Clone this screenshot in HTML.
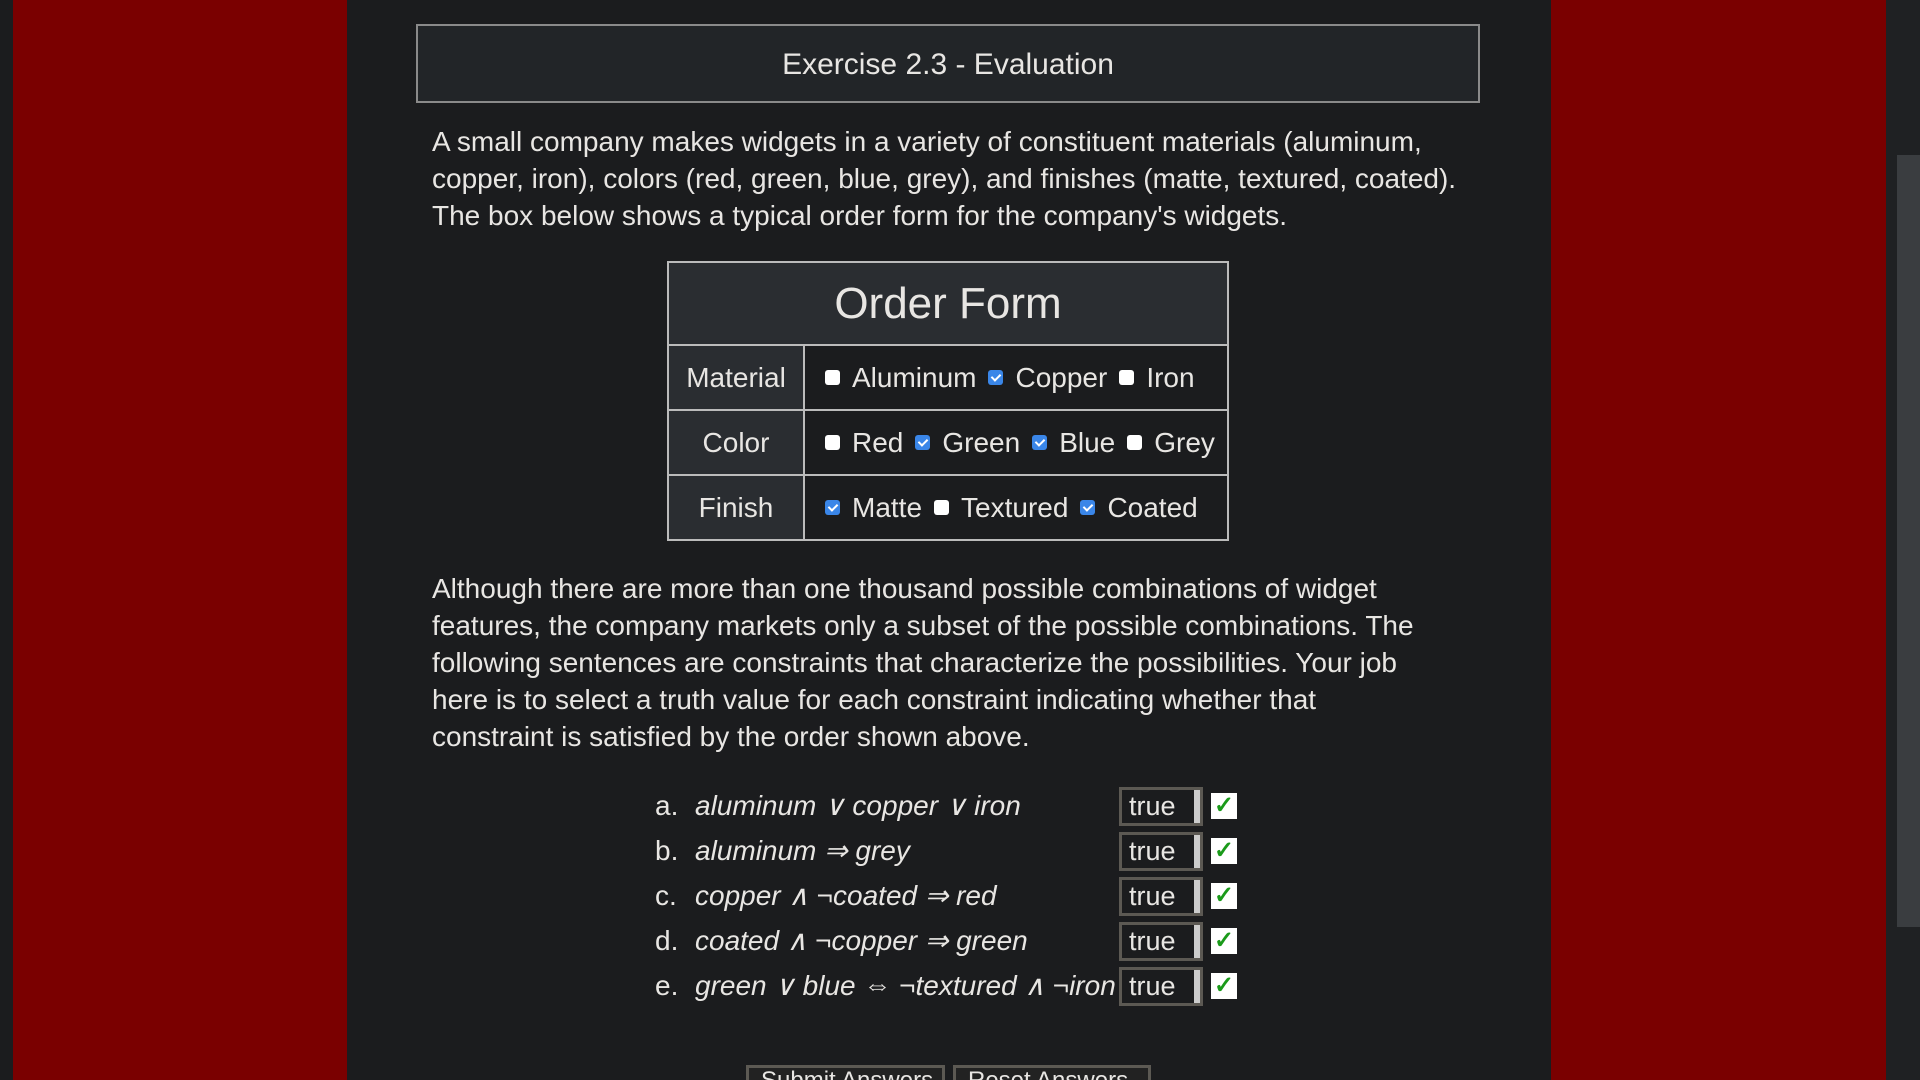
<!DOCTYPE html>
<html style="overflow:hidden"><head><meta charset="utf-8"><style>
*{box-sizing:border-box;margin:0;padding:0}
html,body{width:1920px;height:1080px;overflow:hidden}
body{background:#7a0000;font-family:"Liberation Sans",sans-serif;color:#e8e6e3;position:relative}
.edge{position:absolute;left:0;top:0;width:13px;height:1080px;background:#1b1c1e}
.main{position:absolute;left:347px;top:0;width:1204px;height:1080px;background:#1b1c1e}
.sb{position:absolute;left:1886px;top:0;width:34px;height:1080px;background:#1f2123}
.thumb{position:absolute;left:1897px;top:155px;width:23px;height:772px;background:#3a3d40}
.title{position:absolute;left:416px;top:24px;width:1064px;height:79px;border:2px solid #8a8a8a;background:#222528;text-align:center;line-height:77px;font-size:30px}
.p{position:absolute;left:432px;width:1100px;font-size:28px;line-height:37px;white-space:nowrap}
table{position:absolute;left:667px;top:261px;width:562px;height:280px;border-collapse:collapse;font-size:28px}
td,th{border:2px solid #bbb}
th{height:83px;background:#2a2d31;font-size:44px;font-weight:normal}
td.h{width:136px;background:#2a2d31;text-align:center}
td.v{background:#1b1c1e;padding-left:20px;white-space:nowrap}
.cb{display:inline-block;width:15px;height:15px;border-radius:3px;background:#fff;vertical-align:middle;margin:0 12px 4px 0}
.cb.on{background:#3a86e8;position:relative}
.cb.on:after{content:"";position:absolute;left:5px;top:2px;width:4px;height:7px;border:solid #fff;border-width:0 2px 2px 0;transform:rotate(45deg)}
.sp{margin-right:12px}
.q{position:absolute;left:655px;font-size:28px;height:40px;line-height:40px;width:600px}
.q .l{position:absolute;left:0}
.q .f{position:absolute;left:40px;font-style:italic;white-space:nowrap}
.sel{position:absolute;left:464px;top:1px;width:84px;height:39px;border:3px solid #5c5953;background:#1b1c1e;font-size:27px;line-height:33px;padding-left:7px}
.sel:after{content:"";position:absolute;right:0;top:0;width:6px;height:33px;background:#ccc}
.ok{position:absolute;left:556px;top:7px;width:26px;height:26px;background:#fff;color:#1a9a1a;font-size:24px;font-weight:bold;line-height:26px;text-align:center;font-style:normal}
.btn{position:absolute;top:1065px;height:30px;border:3px solid #5c5953;background:#222;font-size:24px;padding-left:12px;line-height:26px;overflow:hidden;white-space:nowrap}
</style></head><body>
<div class="edge"></div><div class="main"></div><div class="sb"></div><div class="thumb"></div>
<div class="title">Exercise 2.3 - Evaluation</div>
<div class="p" style="top:123px">A small company makes widgets in a variety of constituent materials (aluminum,<br>copper, iron), colors (red, green, blue, grey), and finishes (matte, textured, coated).<br>The box below shows a typical order form for the company's widgets.</div>
<table>
<tr><th colspan="2">Order Form</th></tr>
<tr><td class="h">Material</td><td class="v"><span class="cb"></span><span class="sp">Aluminum</span><span class="cb on"></span><span class="sp">Copper</span><span class="cb"></span>Iron</td></tr>
<tr><td class="h">Color</td><td class="v"><span class="cb"></span><span class="sp">Red</span><span class="cb on"></span><span class="sp">Green</span><span class="cb on"></span><span class="sp">Blue</span><span class="cb"></span>Grey</td></tr>
<tr><td class="h">Finish</td><td class="v"><span class="cb on"></span><span class="sp">Matte</span><span class="cb"></span><span class="sp">Textured</span><span class="cb on"></span>Coated</td></tr>
</table>
<div class="p" style="top:570px">Although there are more than one thousand possible combinations of widget<br>features, the company markets only a subset of the possible combinations. The<br>following sentences are constraints that characterize the possibilities. Your job<br>here is to select a truth value for each constraint indicating whether that<br>constraint is satisfied by the order shown above.</div>
<div class="q" style="top:786px"><span class="l">a.</span><span class="f">aluminum ∨ copper ∨ iron</span><div class="sel">true</div><div class="ok">✓</div></div>
<div class="q" style="top:831px"><span class="l">b.</span><span class="f">aluminum ⇒ grey</span><div class="sel">true</div><div class="ok">✓</div></div>
<div class="q" style="top:876px"><span class="l">c.</span><span class="f">copper ∧ ¬coated ⇒ red</span><div class="sel">true</div><div class="ok">✓</div></div>
<div class="q" style="top:921px"><span class="l">d.</span><span class="f">coated ∧ ¬copper ⇒ green</span><div class="sel">true</div><div class="ok">✓</div></div>
<div class="q" style="top:966px"><span class="l">e.</span><span class="f">green ∨ blue ⇔ ¬textured ∧ ¬iron</span><div class="sel">true</div><div class="ok">✓</div></div>
<div class="btn" style="left:746px;width:199px">Submit Answers</div>
<div class="btn" style="left:953px;width:198px">Reset Answers</div>
</body></html>
